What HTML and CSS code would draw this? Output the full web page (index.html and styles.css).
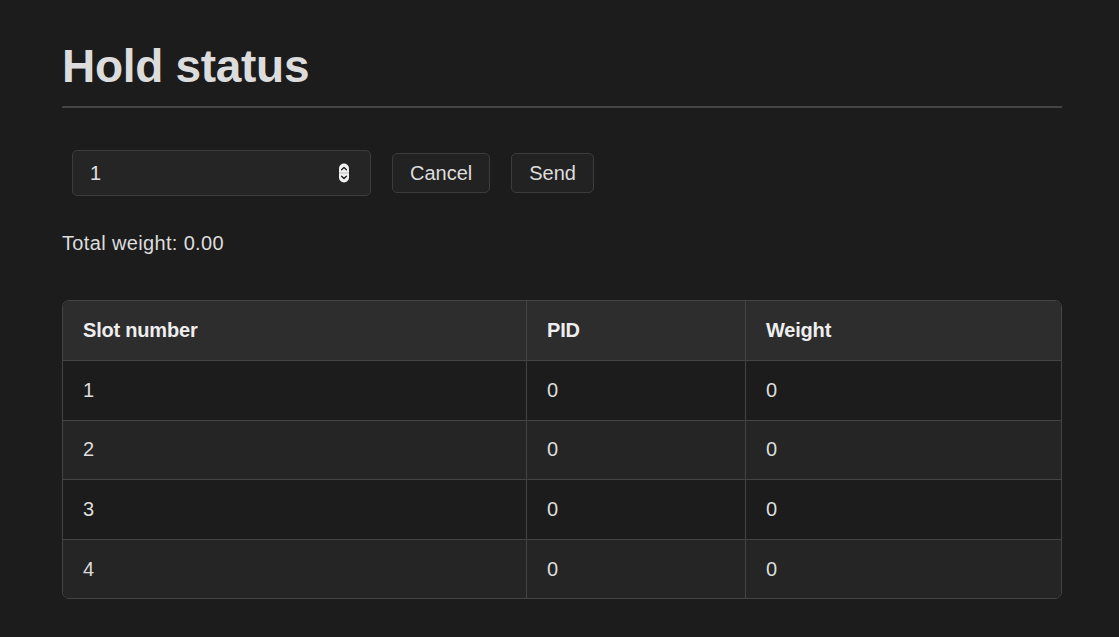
FILE: index.html
```html
<!DOCTYPE html>
<html lang="en">
<head>
<meta charset="utf-8">
<title>Hold status</title>
<link rel="stylesheet" href="styles.css">
</head>
<body>
<main class="page">
  <h1 class="title">Hold status</h1>
  <div class="controls">
    <div class="num-field">
      <input class="num-input" type="text" value="1">
      <svg class="spinner" width="12" height="20" viewBox="0 0 12 20" aria-hidden="true">
        <rect x="1" y="0.5" width="10" height="19" rx="5" fill="#f2f2f2"/>
        <rect x="1" y="9.5" width="10" height="1" fill="#bdbdbd"/>
        <path d="M3.6 6.8 L6 4.4 L8.4 6.8" fill="none" stroke="#222" stroke-width="1.4" stroke-linecap="round" stroke-linejoin="round"/>
        <path d="M3.6 13.2 L6 15.6 L8.4 13.2" fill="none" stroke="#222" stroke-width="1.4" stroke-linecap="round" stroke-linejoin="round"/>
      </svg>
    </div>
    <button class="btn" type="button">Cancel</button>
    <button class="btn" type="button">Send</button>
  </div>
  <p class="total">Total weight: 0.00</p>
  <div class="table-wrap">
    <table class="slots">
      <thead>
        <tr>
          <th class="c-slot">Slot number</th>
          <th class="c-pid">PID</th>
          <th class="c-weight">Weight</th>
        </tr>
      </thead>
      <tbody>
        <tr><td>1</td><td>0</td><td>0</td></tr>
        <tr><td>2</td><td>0</td><td>0</td></tr>
        <tr><td>3</td><td>0</td><td>0</td></tr>
        <tr><td>4</td><td>0</td><td>0</td></tr>
      </tbody>
    </table>
  </div>
</main>
</body>
</html>
```

FILE: styles.css
```css
html, body {
  margin: 0;
  padding: 0;
  background: #1c1c1c;
}

body {
  font-family: "Liberation Sans", Arial, Helvetica, sans-serif;
  color: #dddddd;
  font-size: 20px;
}

.page {
  width: 1000px;
  padding: 38px 0 0 62px;
}

.title {
  margin: 0;
  font-size: 46px;
  line-height: 56px;
  font-weight: 700;
  color: #dcdcdc;
  letter-spacing: -0.3px;
  padding-bottom: 12px;
  border-bottom: 2px solid #444444;
}

.controls {
  display: flex;
  align-items: center;
  gap: 21px;
  margin-top: 42px;
  margin-left: 10px;
}

.num-field {
  display: flex;
  align-items: center;
  box-sizing: border-box;
  width: 299px;
  height: 46px;
  background: #252525;
  border: 1px solid #3c3c3c;
  border-radius: 5px;
  padding: 0 20px 0 17px;
}

.num-input {
  flex: 1;
  min-width: 0;
  background: transparent;
  border: none;
  outline: none;
  color: #e0e0e0;
  font-family: inherit;
  font-size: 20px;
  padding: 0;
}

.spinner {
  display: block;
  flex: none;
}

.btn {
  box-sizing: border-box;
  height: 40px;
  padding: 0 17px;
  background: #222222;
  border: 1px solid #3c3c3c;
  border-radius: 5px;
  color: #dddddd;
  font-family: inherit;
  font-size: 20px;
}

.total {
  margin: 35px 0 0;
  line-height: 24px;
  font-size: 20px;
  letter-spacing: 0.35px;
}

.table-wrap {
  margin-top: 45px;
  border: 1px solid #444444;
  border-radius: 7px;
  overflow: hidden;
}

.slots {
  width: 100%;
  border-collapse: separate;
  border-spacing: 0;
  table-layout: fixed;
}

.slots th,
.slots td {
  text-align: left;
  padding: 0 0 0 20px;
  border-bottom: 1px solid #444444;
  border-right: 1px solid #444444;
  font-size: 20px;
}

.slots th:last-child,
.slots td:last-child {
  border-right: none;
}

.slots tbody tr:last-child td {
  border-bottom: none;
}

.slots th {
  height: 59px;
  background: #2d2d2d;
  color: #eeeeee;
  font-weight: 700;
  letter-spacing: -0.2px;
}

.slots td {
  height: 58.6px;
  color: #dddddd;
  background: #1c1c1c;
}

.slots tbody tr:nth-child(even) td {
  background: #252525;
}

.c-slot { width: 443px; }
.c-pid { width: 198px; }
.c-weight { width: auto; }
```
